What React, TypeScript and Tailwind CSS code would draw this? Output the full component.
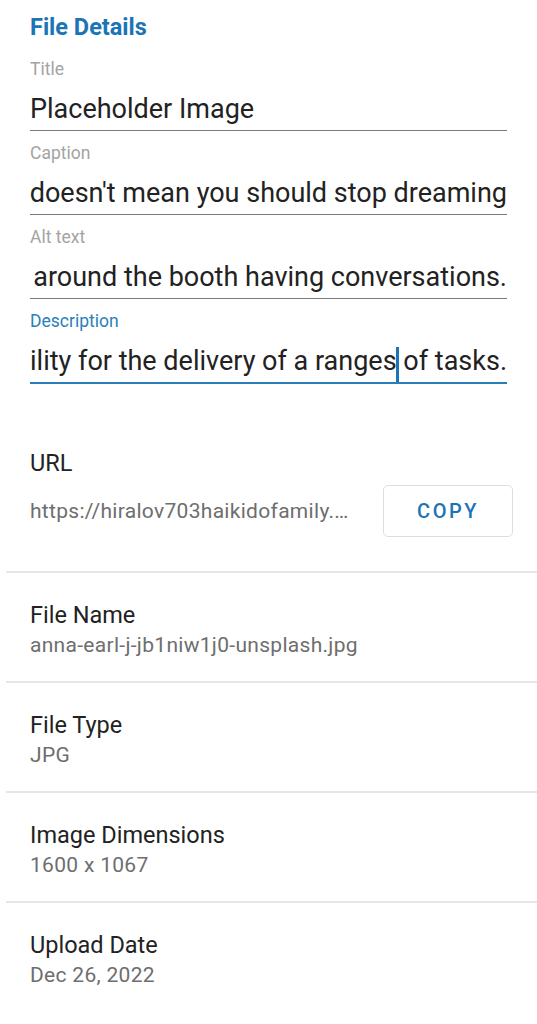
import React from "react";

type Field = { label: string; value: string; active?: boolean; scrolled?: boolean };

const fields: Field[] = [
  { label: "Title", value: "Placeholder Image" },
  { label: "Caption", value: "doesn't mean you should stop dreaming", scrolled: true },
  { label: "Alt text", value: "around the booth having conversations.", scrolled: true },
  { label: "Description", value: "ility for the delivery of a ranges of tasks.", active: true, scrolled: true },
];

const details = [
  { label: "File Name", value: "anna-earl-j-jb1niw1j0-unsplash.jpg" },
  { label: "File Type", value: "JPG" },
  { label: "Image Dimensions", value: "1600 x 1067" },
  { label: "Upload Date", value: "Dec 26, 2022" },
];

function TextField({ label, value, active, scrolled }: Field) {
  const parts = value.split("ranges");
  return (
    <div className="mt-[12px] first:mt-0">
      <div
        className={`text-[17.5px] leading-[20px] ${active ? "text-[#2a7fba]" : "text-[#a3a3a3]"}`}
      >
        {label}
      </div>
      <div
        className={`mt-[14px] flex overflow-hidden whitespace-nowrap pb-[5px] text-[27px] leading-[32px] text-[#222222] ${
          scrolled ? "justify-end" : "justify-start"
        } ${active ? "border-b-2 border-[#2a7fba]" : "border-b border-[#7a7a7a]"}`}
      >
        {active ? (
          <span>
            {parts[0]}ranges
            <span className="relative inline-block h-[32px] w-0 align-top">
              <span className="absolute left-[-1px] top-[2px] h-[35px] w-[3px] bg-[#1f74b5]" />
            </span>
            {parts[1]}
          </span>
        ) : (
          <span>{value}</span>
        )}
      </div>
    </div>
  );
}

export default function App() {
  return (
    <div className="min-h-screen bg-white font-['Roboto',sans-serif]">
      <div className="px-[30px] pt-[13px]">
        <h1 className="text-[23.5px] font-bold leading-[28px] text-[#1b74b6]">File Details</h1>
        <div className="mt-[18px]">
          {fields.map((f) => (
            <TextField key={f.label} {...f} />
          ))}
        </div>
      </div>

      <div className="px-[30px] pt-[65px] pb-[34px]">
        <div className="text-[23.5px] leading-[28px] text-[#222222]">URL</div>
        <div className="mt-[8px] flex items-center justify-between">
          <div className="truncate text-[21px] leading-[26px] tracking-[0.3px] text-[#6e6e6e]">
            https://hiralov703haikidofamily.…
          </div>
          <button className="mr-[-6px] h-[52px] w-[130px] shrink-0 rounded-[5px] border border-[#dedede] text-[20px] font-medium tracking-[2.5px] text-[#1e73b4]">
            COPY
          </button>
        </div>
      </div>

      <div className="ml-[6px]">
        {details.map((d) => (
          <div key={d.label} className="border-t-2 border-[#e6e6e6] pt-[28px] pb-[23px]">
            <div className="pl-[24px] text-[23.5px] leading-[28px] text-[#222222]">{d.label}</div>
            <div className="mt-[3px] pl-[24px] text-[21px] leading-[26px] tracking-[0.3px] text-[#6e6e6e]">
              {d.value}
            </div>
          </div>
        ))}
      </div>
    </div>
  );
}
